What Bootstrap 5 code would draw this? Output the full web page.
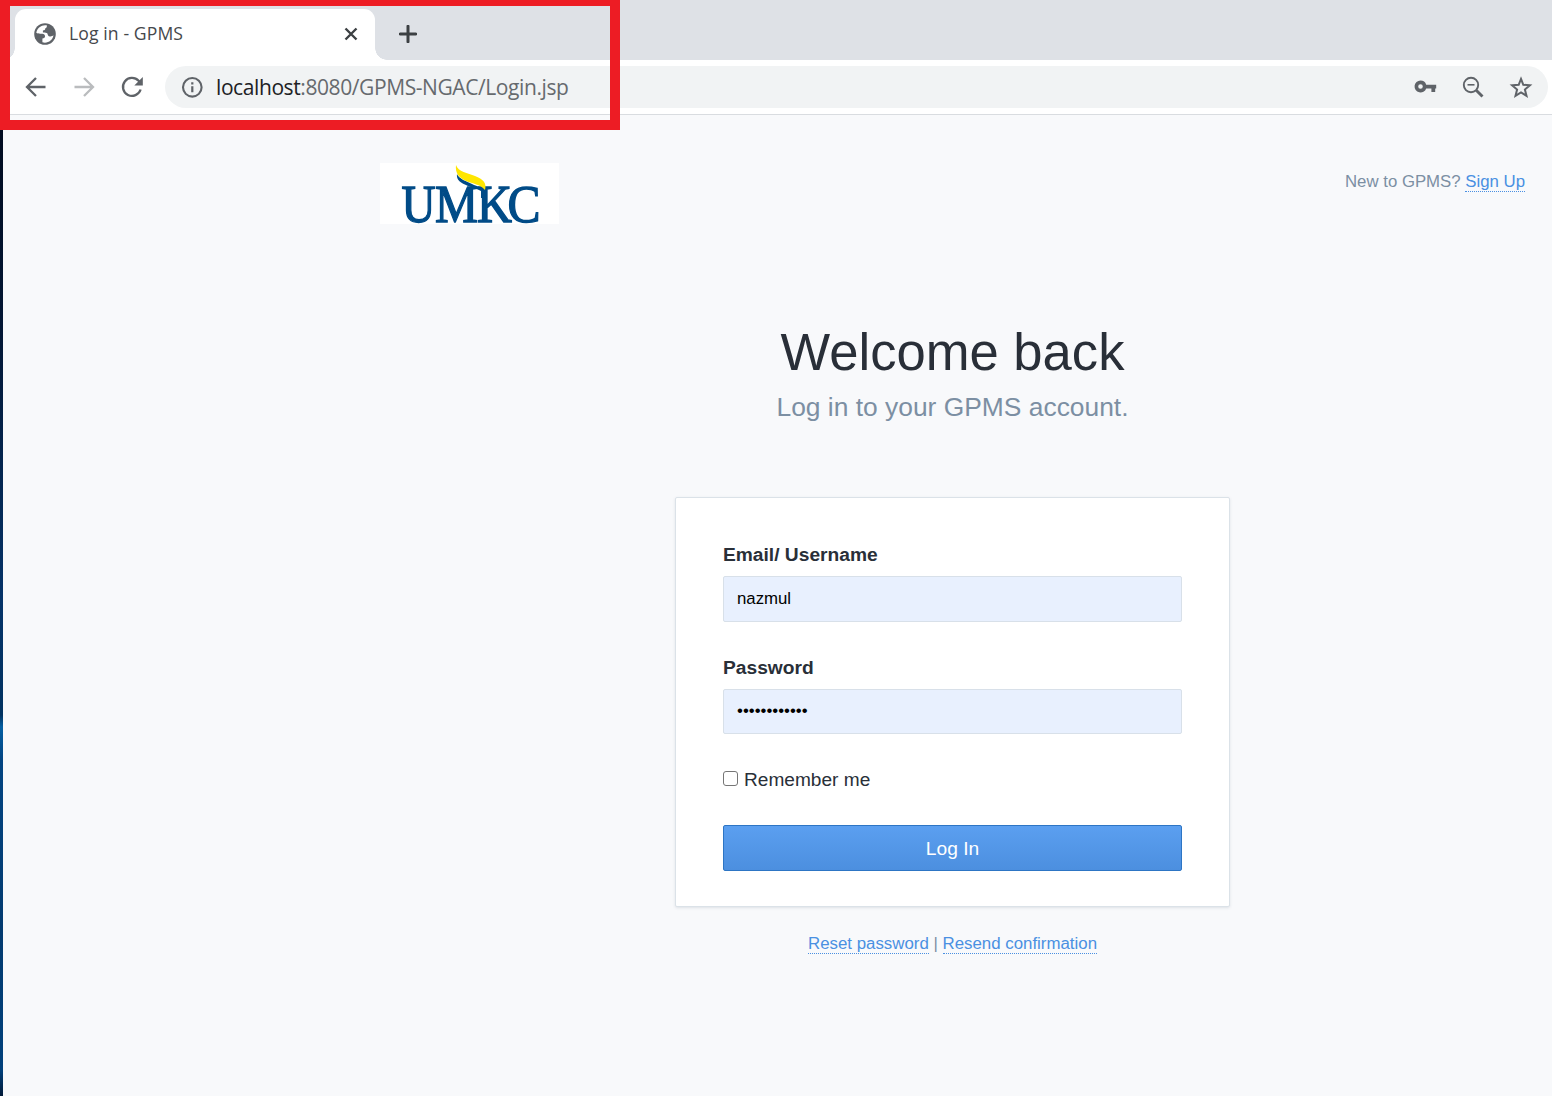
<!DOCTYPE html>
<html lang="en">
<head>
<meta charset="utf-8">
<meta name="viewport" content="width=device-width, initial-scale=1">
<title>Log in - GPMS</title>
<link href="https://cdn.jsdelivr.net/npm/bootstrap@5.3.0/dist/css/bootstrap.min.css" rel="stylesheet">
<style>
body{font-family:"Liberation Sans",Arial,sans-serif;background:#f8f9fb;color:#292f38;height:1096px;overflow:hidden}
.browser-ui{font-family:"Open Sans","Noto Sans",sans-serif}
.tabstrip{height:60px;background:#dee1e6;padding:9px 0 0 15px}
.tab-active{width:360px;height:51px;background:#fff;border-radius:11px 11px 0 0;padding:0 15px 2px 19px}
.tab-active::before,.tab-active::after{content:"";position:absolute;bottom:0;width:12px;height:12px}
.tab-active::before{left:-12px;background:radial-gradient(circle at 0 0,transparent 11.5px,#fff 12px)}
.tab-active::after{right:-12px;background:radial-gradient(circle at 100% 0,transparent 11.5px,#fff 12px)}
.tab-name{font-size:17.6px;color:#45484c;margin-left:13px;line-height:24px;letter-spacing:.1px;padding-bottom:1px}
.new-tab{margin:16px 0 0 24px}
.toolbar{height:55px;background:#fff;border-bottom:1px solid #d9dce0;padding:6px 4px 6px 24px}
.toolbar .nav-icon{width:24px;height:24px;margin:-1px 24px 0 0;flex:none}
.address{height:42px;background:#f1f3f4;border-radius:21px;padding:0 15px 0 15px;margin-left:-3px}
.url{font-size:21px;line-height:28px;color:#666a6e;margin-left:12px;letter-spacing:-.41px;white-space:nowrap}
.url b{font-weight:400;color:#202124}
.page-area{padding:48px 27px 0 377px;margin-left:3px}
.umkc-logo{overflow:visible}
.desk-edge{left:0;top:130px;width:3px;height:966px;background:linear-gradient(#020c20 0,#031735 200px,#053469 470px,#023361 585px,#0560a3 597px,#034582 630px,#033b70 800px,#02417c 940px,#021a38 966px)}
.red-frame{left:0;top:0;width:620px;height:130px;border:solid #ed1c24;border-width:6px 10px 10px}
.soft-link{color:#4a90e2;text-decoration:none;border-bottom:1px dotted #4a90e2;display:inline-block;line-height:19px}
.signup{font-size:16.8px;color:#7c8fa3;margin-top:9px;line-height:20px}
.login-zone{width:555px;margin:98px auto 0;}
.login-zone h1{font-size:52.6px;font-weight:400;line-height:60px;margin:0;color:#292f38}
.subtitle{font-size:26.4px;line-height:32px;color:#7c8fa3;margin-top:9px}
.login-card{width:555px;height:410px;margin-top:74px;border:1px solid #dbe2e8;border-radius:2px;box-shadow:0 1px 3px rgba(50,70,90,.13);padding:46px 47px 0}
.field-name{font-size:19.2px;font-weight:700;line-height:22px;margin:0 0 10px}
.login-card .form-control{height:46px;background:#e8f0fe;border:1px solid #d8e0e9;border-radius:2px;font-size:16.8px;color:#000;padding:0 13px;line-height:44px}
.login-card .form-control.secret{height:45px;padding-bottom:1px}
.form-group-gap{margin-top:35px}
.remember{margin-top:34px;font-size:19.1px;line-height:22px}
.remember label{position:relative;top:1px}
.remember .form-check-input{width:15px;height:15px;margin:0 6px 2px 0;border:1px solid #767676;border-radius:3px}
.login-btn{height:46px;margin-top:35px;border:1px solid #2d75c4;border-radius:2px;background:linear-gradient(#5b9ff0,#4c8fdf);font-size:19.2px;color:#fff;padding:2px 0 0}
.foot-links{font-size:16.85px;line-height:20px;margin-top:27px;color:#7c8fa3}
</style>
<script src="https://cdn.jsdelivr.net/npm/bootstrap@5.3.0/dist/js/bootstrap.bundle.min.js"></script>
</head>
<body>
<header class="browser-ui">
  <div class="tabstrip d-flex">
    <div class="tab-active d-flex align-items-center position-relative">
      <svg width="22" height="22" viewBox="0 0 22 22"><circle cx="11" cy="11" r="10.8" fill="#5f6368"/><path fill="#fff" d="M13 2.500C8 1.500 3.500 4.500 2.300 9.800c1.700 1.200 3.700.8 6 .9 1.700.2 2.700 1 2.700 2.500 0 1.300-.8 2.200-2.600 2.300v3.800c5.300 1.500 10.300-2 11.100-7-1 .9-2 1.200-3.600 1.100-1.600-.1-2.300-1-2.300-2.600-1-1.200-2.500-1.200-4.700-1.200V7.500c1.600-.1 2.400-.7 2.400-2.200 1 0 1.600-1.200 1.700-2.800Z"/></svg>
      <span class="tab-name">Log in - GPMS</span>
      <svg class="ms-auto" width="18" height="18" viewBox="0 0 18 18"><path d="M3.500 3.500l11 11M14.500 3.500l-11 11" stroke="#3c4043" stroke-width="2.400"/></svg>
    </div>
    <svg class="new-tab" width="18" height="18" viewBox="0 0 18 18"><path d="M9 1.200v15.600M1.200 9h15.600" stroke="#3c4043" stroke-width="3" stroke-linecap="round"/></svg>
  </div>
  <div class="toolbar d-flex align-items-center">
    <svg class="nav-icon" viewBox="0 0 24 24"><path d="M21.500 12H3.500M12 3l-9 9 9 9" fill="none" stroke="#5f6368" stroke-width="2.300"/></svg>
    <svg class="nav-icon" viewBox="0 0 24 24"><path d="M2.500 12h18M12 3l9 9-9 9" fill="none" stroke="#babcbe" stroke-width="2.300"/></svg>
    <svg class="nav-icon" viewBox="0 0 24 24"><path d="M20.600 14.500a9 9 0 1 1-2-8.700l2 2.200" fill="none" stroke="#5f6368" stroke-width="2.300"/><path d="M22.800 2v8.500h-8.500Z" fill="#5f6368"/></svg>
    <div class="address d-flex align-items-center flex-grow-1">
      <svg width="24" height="24" viewBox="0 0 24 24"><circle cx="12.300" cy="12.300" r="9.300" fill="none" stroke="#5f6368" stroke-width="2.100"/><path d="M12.300 11.200v6M12.300 7.300v2.200" stroke="#5f6368" stroke-width="2.200"/></svg>
      <span class="url"><b>localhost</b>:8080/GPMS-NGAC/Login.jsp</span>
      <div class="d-flex align-items-center ms-auto gap-4">
        <svg width="24" height="24" viewBox="0 0 24 24"><path fill="#5f6368" fill-rule="evenodd" d="M7.500 5.500a6 6 0 1 0 5.700 8h5.200V17h3.800v-3.500h1V9.700h-10A6 6 0 0 0 7.500 5.500Zm0 3.700a2.300 2.300 0 1 1 0 4.600 2.300 2.300 0 0 1 0-4.600Z"/></svg>
        <svg width="24" height="24" viewBox="0 0 24 24"><circle cx="10" cy="10" r="7.200" fill="none" stroke="#5f6368" stroke-width="1.900"/><path d="M6.500 9.800h7" stroke="#5f6368" stroke-width="1.600"/><path d="M15.200 15.200l6.300 6.300" stroke="#5f6368" stroke-width="2.900"/></svg>
        <svg width="24" height="24" viewBox="0 0 24 24"><path d="M12 3.900l2.300 5.900 6.600.5-5 4.200 1.600 6.300-5.500-3.400-5.500 3.400 1.600-6.300-5-4.200 6.600-.5Z" fill="none" stroke="#5f6368" stroke-width="2"/></svg>
      </div>
    </div>
  </div>
</header>

<main class="page-area">
  <div class="d-flex justify-content-between align-items-start">
    <svg class="umkc-logo" width="179" height="61" viewBox="0 0 179 61" role="img" aria-label="UMKC">
      <rect width="179" height="61" fill="#fff"/>
      <g font-family="Liberation Serif, serif" font-size="52" fill="#004b87" stroke="#004b87" stroke-width="1.300">
        <text x="21.500" y="58.500" textLength="34" lengthAdjust="spacingAndGlyphs">U</text>
        <text x="55" y="58.500" textLength="43" lengthAdjust="spacingAndGlyphs">M</text>
        <text x="97" y="58.500" textLength="35" lengthAdjust="spacingAndGlyphs">K</text>
        <text x="127.500" y="58.500" textLength="33" lengthAdjust="spacingAndGlyphs">C</text>
      </g>
      <path d="M77 11c2 5 9 7 17 11 6 2 10 4 12 8v5h-5v-7c-3-2-8-3-13-5-7-3-12-6-11-12Z" fill="#004b87"/>
      <path d="M76 2c2 7 12 8 19 11 8 3 12 7 10 14-5-6-12-6-19-9-7-3-11-8-10-16Z" fill="#ffe600"/>
    </svg>
    <div class="signup">New to GPMS? <a class="soft-link" href="#">Sign Up</a></div>
  </div>

  <section class="login-zone text-center">
    <h1>Welcome back</h1>
    <div class="subtitle">Log in to your GPMS account.</div>
    <form class="login-card bg-white text-start">
      <label class="field-name d-block" for="user">Email/ Username</label>
      <input id="user" class="form-control" type="text" value="nazmul">
      <label class="field-name form-group-gap d-block" for="pass">Password</label>
      <input id="pass" class="form-control secret" type="password" value="passwordpass">
      <div class="remember d-flex align-items-center"><input id="rem" class="form-check-input flex-shrink-0" type="checkbox"><label for="rem">Remember me</label></div>
      <button class="btn login-btn w-100 d-block" type="button">Log In</button>
    </form>
    <div class="foot-links"><a class="soft-link" href="#">Reset password</a> | <a class="soft-link" href="#">Resend confirmation</a></div>
  </section>
</main>
<div class="desk-edge position-absolute"></div>
<div class="red-frame position-absolute pe-none"></div>
</body>
</html>
